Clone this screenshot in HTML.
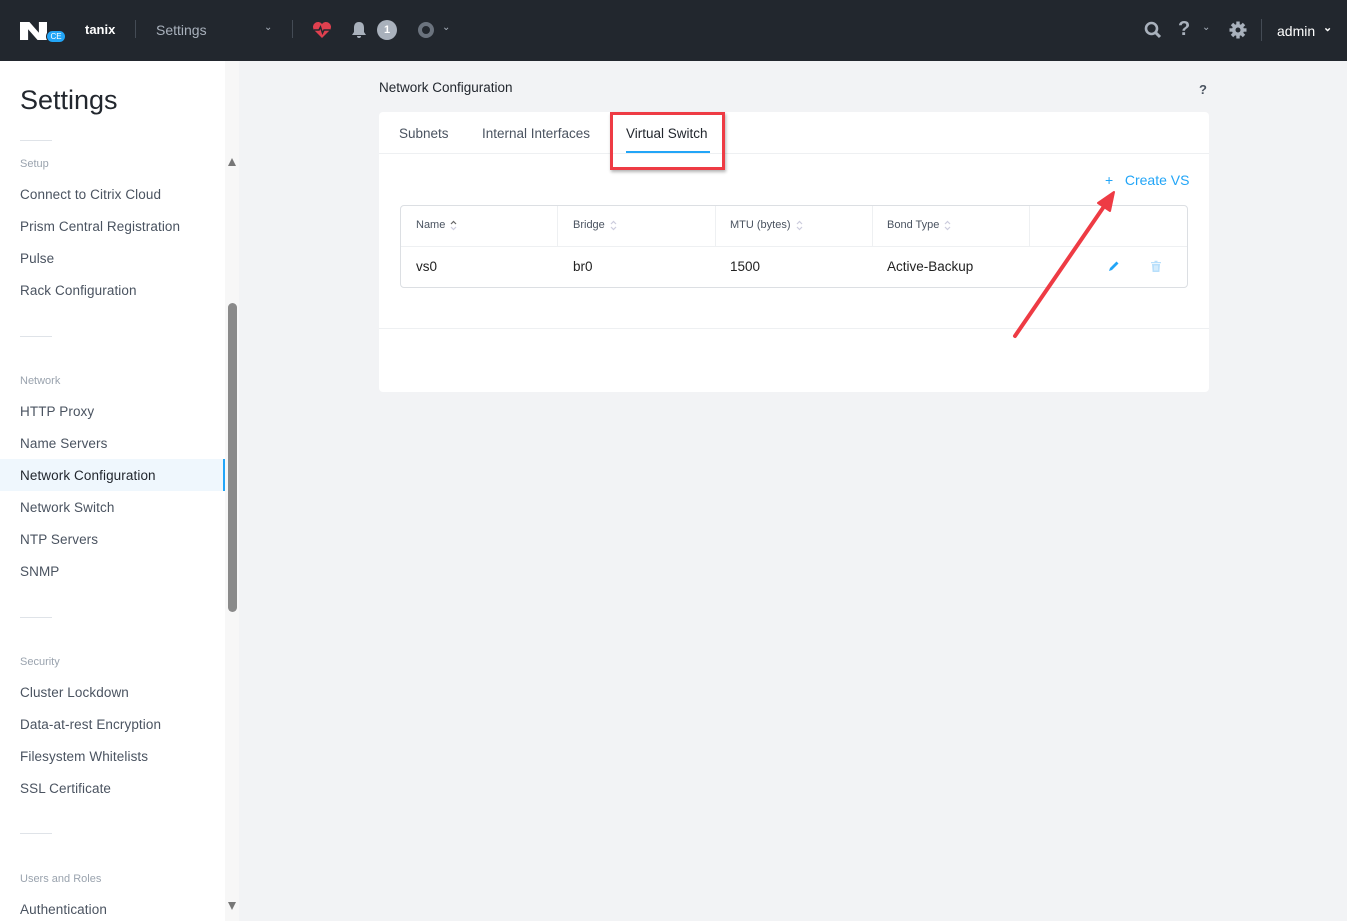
<!DOCTYPE html>
<html><head><meta charset="utf-8"><style>
*{box-sizing:border-box;margin:0;padding:0}
body{width:1347px;height:921px;overflow:hidden;background:#f2f3f5;font-family:"Liberation Sans",sans-serif;position:relative}
.top{position:absolute;left:0;top:0;width:1347px;height:61px;background:#22272e}
.t{position:absolute;font-size:14px}
.side{position:absolute;left:0;top:61px;width:225px;height:860px;background:#fff}
.track{position:absolute;left:225px;top:61px;width:14px;height:860px;background:#f7f7f7}
.thumb{position:absolute;left:228px;top:303px;width:9px;height:309px;background:#8a8a8a;border-radius:5px}
.s{position:absolute;left:20px;font-size:13.5px;color:#4a5360;letter-spacing:.1px}
.h{position:absolute;left:20px;font-size:11px;color:#9aa3ae}
.ln{position:absolute;left:20px;width:32px;height:1px;background:#dfe3e8}
.card{position:absolute;left:379px;top:112px;width:830px;height:280px;background:#fff;border-radius:4px}
.tbl{position:absolute;left:400px;top:205px;width:788px;height:83px;border:1px solid #dcdfe3;border-radius:4px;background:#fff}
.th{position:absolute;top:13px;font-size:11px;color:#4a5360}
.td{position:absolute;top:53px;font-size:13.5px;color:#222}
.sort{display:inline-block;vertical-align:middle;margin-left:2px}
</style></head><body>
<div class="top">
 <div style="position:absolute;left:20px;top:22px;width:27px;height:18px;background:#fff;clip-path:polygon(0 0,35% 0,70% 60%,70% 0,100% 0,100% 100%,65% 100%,30% 40%,30% 100%,0 100%)"></div>
 <div style="position:absolute;left:46px;top:30px;width:20px;height:13px;border-radius:7px;background:#22a5f7;border:1px solid #22272e;color:#fff;font-size:8px;text-align:center;line-height:11px">CE</div>
 <div class="t" style="left:85px;top:22px;color:#fff;font-weight:bold;font-size:13px">tanix</div>
 <div style="position:absolute;left:135px;top:20px;width:1px;height:18px;background:#444b55"></div>
 <div class="t" style="left:156px;top:22px;color:#a9b1bc;font-size:14px">Settings</div>
 <div class="t" style="left:264px;top:22px;color:#a9b1bc;font-size:10px">⌄</div>
 <div style="position:absolute;left:292px;top:20px;width:1px;height:18px;background:#444b55"></div>
 <svg style="position:absolute;left:312px;top:21px" width="20" height="18" viewBox="0 0 20 18"><path d="M10 17 L2 9 A5 5 0 0 1 10 3 A5 5 0 0 1 18 9 Z" fill="#e0404f"/><path d="M2 9 H7 L8.5 6 L10.5 12 L12 9 H18" stroke="#22272e" stroke-width="1.5" fill="none"/></svg>
 <svg style="position:absolute;left:351px;top:21px" width="16" height="18" viewBox="0 0 16 18"><path d="M8 1 C4 1 3 4 3 7 V11 L1 14 H15 L13 11 V7 C13 4 12 1 8 1Z M6 15 H10 A2 2 0 0 1 6 15Z" fill="#a9b1bc"/></svg>
 <div style="position:absolute;left:377px;top:20px;width:20px;height:20px;border-radius:50%;background:#a9b1bc;color:#fff;font-size:11px;font-weight:bold;text-align:center;line-height:20px">1</div>
 <div style="position:absolute;left:418px;top:22px;width:16px;height:16px;border-radius:50%;border:4px solid #6b737e"></div>
 <div class="t" style="left:442px;top:22px;color:#a9b1bc;font-size:10px">⌄</div>
 <svg style="position:absolute;left:1144px;top:21px" width="18" height="18" viewBox="0 0 18 18"><circle cx="7.5" cy="7.5" r="5.5" stroke="#a9b1bc" stroke-width="2.6" fill="none"/><path d="M11.5 11.5 L16 16" stroke="#a9b1bc" stroke-width="3"/></svg>
 <div class="t" style="left:1178px;top:18px;color:#a9b1bc;font-size:20px;font-weight:bold">?</div>
 <div class="t" style="left:1202px;top:22px;color:#a9b1bc;font-size:10px">⌄</div>
 <svg style="position:absolute;left:1229px;top:21px" width="18" height="18" viewBox="0 0 18 18"><g fill="#a9b1bc"><circle cx="9" cy="9" r="6"/><rect x="7.3" y="0.5" width="3.4" height="17"/><rect x="0.5" y="7.3" width="17" height="3.4"/><rect x="7.3" y="0.5" width="3.4" height="17" transform="rotate(45 9 9)"/><rect x="7.3" y="0.5" width="3.4" height="17" transform="rotate(-45 9 9)"/></g><circle cx="9" cy="9" r="2.5" fill="#22272e"/></svg>
 <div style="position:absolute;left:1261px;top:19px;width:1px;height:22px;background:#444b55"></div>
 <div class="t" style="left:1277px;top:23px;color:#fff;font-size:14px">admin</div>
 <div class="t" style="left:1323px;top:21px;color:#fff;font-size:11px;font-weight:bold">⌄</div>
</div>
<div class="side">
 <div style="position:absolute;left:20px;top:24px;font-size:27px;color:#22272e">Settings</div>
 <div class="ln" style="top:79px"></div>
 <div class="h" style="top:97px">Setup</div>
 <div class="s" style="top:126px">Connect to Citrix Cloud</div>
 <div class="s" style="top:158px">Prism Central Registration</div>
 <div class="s" style="top:190px">Pulse</div>
 <div class="s" style="top:222px">Rack Configuration</div>
 <div class="ln" style="top:275px"></div>
 <div class="h" style="top:314px">Network</div>
 <div class="s" style="top:343px">HTTP Proxy</div>
 <div class="s" style="top:375px">Name Servers</div>
 <div style="position:absolute;left:0;top:398px;width:225px;height:32px;background:#eff7fd;border-right:2px solid #22a5f7"></div>
 <div class="s" style="top:407px;color:#22272e">Network Configuration</div>
 <div class="s" style="top:439px">Network Switch</div>
 <div class="s" style="top:471px">NTP Servers</div>
 <div class="s" style="top:503px">SNMP</div>
 <div class="ln" style="top:556px"></div>
 <div class="h" style="top:595px">Security</div>
 <div class="s" style="top:624px">Cluster Lockdown</div>
 <div class="s" style="top:656px">Data-at-rest Encryption</div>
 <div class="s" style="top:688px">Filesystem Whitelists</div>
 <div class="s" style="top:720px">SSL Certificate</div>
 <div class="ln" style="top:772px"></div>
 <div class="h" style="top:812px">Users and Roles</div>
 <div class="s" style="top:841px">Authentication</div>
</div>
<div class="track"></div>
<div class="thumb"></div>
<div style="position:absolute;left:228px;top:158px;width:0;height:0;border-left:4.5px solid transparent;border-right:4.5px solid transparent;border-bottom:8px solid #777"></div>
<div style="position:absolute;left:228px;top:902px;width:0;height:0;border-left:4.5px solid transparent;border-right:4.5px solid transparent;border-top:8px solid #777"></div>

<div style="position:absolute;left:379px;top:80px;font-size:13.5px;color:#22272e">Network Configuration</div>
<div style="position:absolute;left:1199px;top:82px;font-size:13px;color:#4a5360;font-weight:bold">?</div>
<div class="card">
 <div style="position:absolute;left:0;top:41px;width:830px;height:1px;background:#eef0f2"></div>
 <div style="position:absolute;left:20px;top:14px;font-size:13.5px;color:#4a5360">Subnets</div>
 <div style="position:absolute;left:103px;top:14px;font-size:13.5px;color:#4a5360">Internal Interfaces</div>
 <div style="position:absolute;left:247px;top:14px;font-size:13.5px;color:#22272e">Virtual Switch</div>
 <div style="position:absolute;left:247px;top:39px;width:84px;height:2px;background:#22a5f7"></div>
 <div style="position:absolute;left:0;top:216px;width:830px;height:1px;background:#eef0f2"></div>
 <div style="position:absolute;left:726px;top:60px;font-size:14px;color:#22a5f7">+&nbsp;&nbsp; Create VS</div>
</div>
<div style="position:absolute;left:610px;top:112px;width:115px;height:58px;border:3px solid #ee3b44;box-shadow:1px 2px 3px rgba(0,0,0,.3)"></div>
<div class="tbl">
 <div style="position:absolute;left:0;top:40px;width:786px;height:1px;background:#eef0f2"></div>
 <div style="position:absolute;left:156px;top:0;width:1px;height:40px;background:#eef0f2"></div>
 <div style="position:absolute;left:314px;top:0;width:1px;height:40px;background:#eef0f2"></div>
 <div style="position:absolute;left:471px;top:0;width:1px;height:40px;background:#eef0f2"></div>
 <div style="position:absolute;left:628px;top:0;width:1px;height:40px;background:#eef0f2"></div>
 <div class="th" style="left:15px">Name <svg class="sort" width="7" height="11" viewBox="0 0 7 11"><path d="M1 4 L3.5 1.5 L6 4" stroke="#666" fill="none" stroke-width="1.2"/><path d="M1 7 L3.5 9.5 L6 7" stroke="#ccd" fill="none" stroke-width="1.2"/></svg></div>
 <div class="th" style="left:172px">Bridge <svg class="sort" width="7" height="11" viewBox="0 0 7 11"><path d="M1 4 L3.5 1.5 L6 4 M1 7 L3.5 9.5 L6 7" stroke="#ccd" fill="none" stroke-width="1.2"/></svg></div>
 <div class="th" style="left:329px">MTU (bytes) <svg class="sort" width="7" height="11" viewBox="0 0 7 11"><path d="M1 4 L3.5 1.5 L6 4 M1 7 L3.5 9.5 L6 7" stroke="#ccd" fill="none" stroke-width="1.2"/></svg></div>
 <div class="th" style="left:486px">Bond Type <svg class="sort" width="7" height="11" viewBox="0 0 7 11"><path d="M1 4 L3.5 1.5 L6 4 M1 7 L3.5 9.5 L6 7" stroke="#ccd" fill="none" stroke-width="1.2"/></svg></div>
 <div class="td" style="left:15px">vs0</div>
 <div class="td" style="left:172px">br0</div>
 <div class="td" style="left:329px">1500</div>
 <div class="td" style="left:486px">Active-Backup</div>
 <svg style="position:absolute;left:707px;top:54px" width="12" height="12" viewBox="0 0 12 12"><path d="M1 11 L2 8 L8.5 1.5 L10.5 3.5 L4 10 Z" fill="#22a5f7"/></svg>
 <svg style="position:absolute;left:749px;top:54px" width="12" height="13" viewBox="0 0 12 13"><path d="M1 2 H11 V3.2 H1Z M4.5 0.8 H7.5 V2 H4.5Z M2 4 H10 L9.4 12 H2.6Z" fill="#b8dffb"/><path d="M5 5.5V10.5M7 5.5V10.5" stroke="#fff" stroke-width="0.8"/></svg>
</div>
<svg style="position:absolute;left:0;top:0" width="1347" height="921"><path d="M1015 336 L1105 205" stroke="#ee3b44" stroke-width="4" stroke-linecap="round"/><path d="M1114 192 L1098 203 L1110 211 Z" fill="#ee3b44" stroke="#ee3b44" stroke-width="2" stroke-linejoin="round"/></svg>
</body></html>
